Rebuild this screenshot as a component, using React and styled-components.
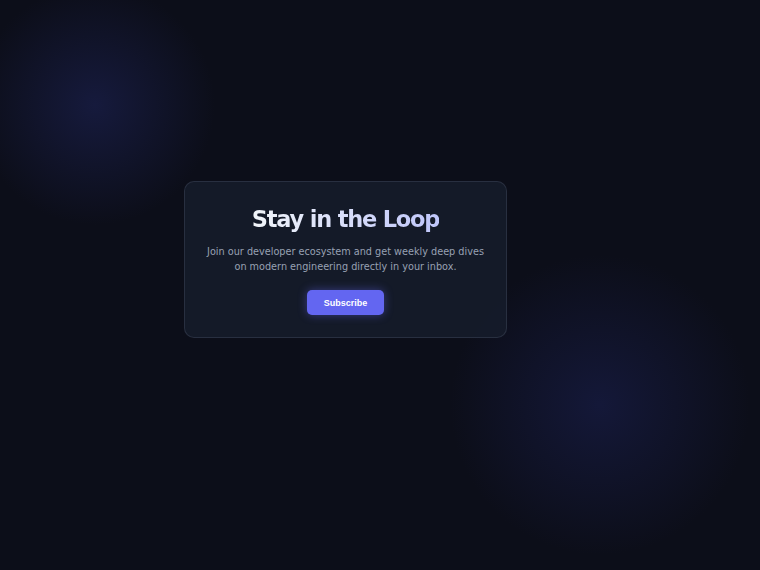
import styled, {createGlobalStyle} from 'styled-components';

const GlobalStyle = createGlobalStyle`
  html, body {
    margin: 0;
    padding: 0;
    background: #0c0e19;
  }

  body {
    font-family: 'DejaVu Sans', Verdana, sans-serif;
  }
`;

const Page = styled.div`
  width: 760px;
  height: 570px;
  overflow: hidden;
  box-sizing: border-box;
  padding: 181px 0 0 184px;
  background:
    radial-gradient(circle at 95px 105px, rgba(30, 36, 90, 0.55) 0, rgba(30, 36, 90, 0) 120px),
    radial-gradient(circle at 600px 405px, rgba(28, 34, 88, 0.5) 0, rgba(28, 34, 88, 0) 150px),
    #0c0e19;
`;

const Card = styled.section`
  width: 323px;
  box-sizing: border-box;
  padding: 24px 16px 22px;
  border: 1px solid rgba(148, 163, 184, 0.16);
  border-radius: 10px;
  background: rgba(22, 28, 44, 0.85);
  display: flex;
  flex-direction: column;
  align-items: center;
  text-align: center;
`;

const Title = styled.h2`
  margin: 0;
  font-size: 22.5px;
  font-weight: 700;
  letter-spacing: -1.2px;
  line-height: 1.2;
  background: linear-gradient(90deg, #f1f5f9 0%, #bfc6fa 100%);
  -webkit-background-clip: text;
  background-clip: text;
  color: transparent;
`;

const Blurb = styled.p`
  margin: 11px 0 16px;
  font-size: 9.7px;
  line-height: 15px;
  color: #98a1b3;
`;

const SubscribeButton = styled.button`
  width: 77px;
  height: 25px;
  border: none;
  border-radius: 5px;
  background: #6366f1;
  color: #fff;
  font-family: 'Liberation Sans', Arial, sans-serif;
  font-size: 9px;
  font-weight: 700;
  cursor: pointer;
  box-shadow: 0 0 10px rgba(99, 102, 241, 0.45);
`;

export default function App() {
  return (
    <>
      <GlobalStyle />
      <Page>
        <Card>
          <Title>Stay in the Loop</Title>
          <Blurb>
            Join our developer ecosystem and get weekly deep dives
            <br />
            on modern engineering directly in your inbox.
          </Blurb>
          <SubscribeButton>Subscribe</SubscribeButton>
        </Card>
      </Page>
    </>
  );
}
